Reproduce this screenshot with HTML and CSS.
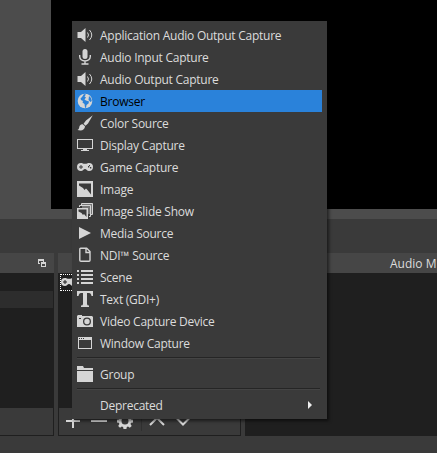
FILE: index.html
```html
<!DOCTYPE html>
<html lang="en">
<head>
<meta charset="utf-8">
<title>Sources</title>
<link rel="stylesheet" href="styles.css">
</head>
<body>
<div class="preview"><div class="canvas"></div></div>
<main class="docks">
  <section class="dock scenes">
    <header class="dock-title"><svg class="float" width="8" height="8" viewBox="0 0 8 8"><path d="M0 0h6v3H5V2H1v2h1v1H0zM3 3h5v5H3zM4 5v2h3V5z" fill-rule="evenodd"/></svg></header>
    <div class="list"><div class="row"></div></div>
    <footer class="toolbar"></footer>
  </section>
  <section class="dock sources">
    <header class="dock-title"></header>
    <div class="list"><div class="source"><svg width="16" height="14" viewBox="0 1 16 14"><path fill-rule="evenodd" d="M4 4c1.500 0 2 .8 4 .8s2.500-.8 4-.8a4 4 0 0 1 0 8c-2 0-2.500-2-4-2s-2 2-4 2a4 4 0 0 1 0-8zM3.500 6v1.500H2v1h1.500V10h1V8.500H6v-1H4.500V6z"/></svg></div></div>
    <footer class="toolbar">
      <svg width="16" height="16" viewBox="0 0 16 16"><path d="M7 1h2v6h6v2H9v6H7V9H1V7h6z"/></svg>
      <svg width="16" height="16" viewBox="0 0 16 16"><path d="M0 7h16v2H0z"/></svg>
      <svg class="gear" width="16" height="16" viewBox="0 0 16 16"><path fill-rule="evenodd" d="M6.500 0h3l.4 2.200 1.300.6L13.100 1.500l1.700 1.800-1.200 1.900.5 1.200 1.900.3v2.700l-2 .4-.5 1.300 1.200 1.800-1.900 1.900-1.800-1.200-1.200.5-.4 1.900H6.500l-.4-1.900-1.300-.5-1.800 1.200-1.800-1.900 1.200-1.800-.5-1.300-1.900-.4V6.700l1.900-.3.5-1.200-1.200-1.900L3 1.500l1.800 1.300 1.300-.6zM8 4.500a3.500 3.500 0 1 0 0 7 3.500 3.500 0 0 0 0-7z"/></svg>
      <i class="divider"></i>
      <svg class="up" width="16" height="16" viewBox="0 0 16 16"><path class="line" d="M1 12l7-7 7 7"/></svg>
      <svg class="down" width="16" height="16" viewBox="0 0 16 16"><path class="line" d="M1.500 5L8 11.500 14.500 5"/></svg>
    </footer>
  </section>
  <section class="dock mixer">
    <header class="dock-title"><span>Audio Mixer</span></header>
    <div class="list"></div>
  </section>
</main>

<nav class="menu">
  <div class="item"><svg viewBox="0 0 16 16"><path d="M.5 5H4l4.500-4v14L4 11H.5z"/><path class="thin" d="M10.500 5.500q2 2.500 0 5M12.500 3q4.500 5 0 10"/></svg><span>Application Audio Output Capture</span></div>
  <div class="item"><svg viewBox="0 0 16 16"><rect x="5.500" y="0" width="5" height="10" rx="2.500"/><path class="mid" d="M2.700 6v1.500a5.300 4.500 0 0 0 10.600 0V6M8 12v3M4.500 15h7"/></svg><span>Audio Input Capture</span></div>
  <div class="item"><svg viewBox="0 0 16 16"><path d="M.5 5H4l4.500-4v14L4 11H.5z"/><path class="thin" d="M10.500 5.500q2 2.500 0 5M12.500 3q4.500 5 0 10"/></svg><span>Audio Output Capture</span></div>
  <div class="item selected"><svg viewBox="0 0 16 16"><circle cx="8" cy="8" r="7.300"/><path class="land" d="M7 1l2 .5-1.500 2L9 4.500 7.500 6.500l1.500 1 3 1-.5 2L9.500 12 9 15l-1-.5L7.500 11 5.500 9.500 6 8 4 7l-.5-1.500L5 4zM12 3l2 2 .8 3-1.300 1-2-2z"/></svg><span>Browser</span></div>
  <div class="item"><svg viewBox="0 0 16 16"><path d="M15.800.2L9 5.500 6.500 8.700l2 2L11 8.500zM5.800 9.200C3.500 9 2.500 10.500 2.300 12S1.500 14.500.5 15c4 1.200 7.500 0 7.500-3.700z"/></svg><span>Color Source</span></div>
  <div class="item"><svg viewBox="0 0 16 16"><path fill-rule="evenodd" d="M0 2h16v10H0zm1 1v8h14V3zM6 12h4v1h2v1H4v-1h2z"/></svg><span>Display Capture</span></div>
  <div class="item"><svg viewBox="0 0 16 16"><path fill-rule="evenodd" d="M4 4c1.500 0 2 .8 4 .8s2.500-.8 4-.8a4 4 0 0 1 0 8c-2 0-2.500-2-4-2s-2 2-4 2a4 4 0 0 1 0-8zM3.500 6v1.500H2v1h1.500V10h1V8.500H6v-1H4.500V6zM11 7v1.500h1.300V7zm2 1v1.500h1.300V8zM12 6v1h1V6z"/></svg><span>Game Capture</span></div>
  <div class="item"><svg viewBox="0 0 16 16"><path d="M0 0h16v16H0z"/><path class="cut" d="M2 2.500h12v11l-3.500-4.500L9 7.500l-1.500 1.500L6 7 2 4.500z"/></svg><span>Image</span></div>
  <div class="item"><svg viewBox="0 0 16 16"><path class="back" d="M5 0h11v11H5z"/><path class="thin" d="M4.500 2V.5h11v11H14M2.500 4V2.500h11v11H12"/><path d="M0 5h11v11H0z"/><path class="cut" d="M1.500 6.500h8v7.500L7 11l-1 1-1.500-2-3-1.500z"/></svg><span>Image Slide Show</span></div>
  <div class="item"><svg viewBox="0 0 16 16"><path d="M2 2l12 6-12 6z"/></svg><span>Media Source</span></div>
  <div class="item"><svg viewBox="0 0 16 16"><path class="mid" d="M3.700 1.200h6L13 4.500v8.800q0 1-1 1H4q-1.200 0-1.200-1V2.200q0-1 .9-1zM9 1.500V5.500h4"/></svg><span>NDI™ Source</span></div>
  <div class="item"><svg viewBox="0 0 16 16"><path d="M0 1h2v2H0zM4 1h12v2H4zM0 5h2v2H0zM4 5h12v2H4zM0 9h2v2H0zM4 9h12v2H4zM0 13h2v2H0zM4 13h12v2H4z"/></svg><span>Scene</span></div>
  <div class="item"><svg viewBox="0 0 16 16"><path d="M0 0h16v5h-1.500Q14 2 12 2h-2v11q0 1.500 2 1.500V16H4v-1.500q2 0 2-1.500V2H4Q2 2 1.500 5H0z"/></svg><span>Text (GDI+)</span></div>
  <div class="item"><svg viewBox="0 0 16 16"><path fill-rule="evenodd" d="M1 2h4v1h10l1 1v10H0V3zM10 4.500a4 4 0 1 0 0 8 4 4 0 0 0 0-8zm0 1.300a2.700 2.700 0 1 1 0 5.400 2.700 2.700 0 0 1 0-5.400zM2 5v1h2V5z"/></svg><span>Video Capture Device</span></div>
  <div class="item"><svg viewBox="0 0 16 16"><path fill-rule="evenodd" d="M1 2h14v12H1zm1 3v8h12V5zm0-2v1h1V3zm2 0v1h1V3zm2 0v1h1V3z"/></svg><span>Window Capture</span></div>
  <hr>
  <div class="item"><svg viewBox="0 0 16 16"><path d="M0 0h6l1 2h9v2H0zM0 5h16v11H0z"/></svg><span>Group</span></div>
  <hr>
  <div class="item"><svg viewBox="0 0 16 16"></svg><span>Deprecated</span><svg class="arrow" viewBox="0 0 4 8"><path d="M0 0l4 4-4 4z"/></svg></div>
</nav>
</body>
</html>
```
FILE: styles.css
```css
* { box-sizing: border-box; }
body {
  margin: 0;
  width: 437px;
  height: 453px;
  overflow: hidden;
  background: #3a3a3a;
  color: #dcdcdc;
  font: 12px/22px "Open Sans", "Noto Sans", sans-serif;
  letter-spacing: -.25px;
}
svg { display: block; fill: #d5d5d5; flex: none; }
.thin, .mid, .line { fill: none; stroke: #d5d5d5; stroke-width: 1; }
.mid { stroke-width: 1.400; }
.line { stroke-width: 2; }
.cut { fill: #3a3a3a; }
.back { fill: #777; }
.land { fill: #2a82da; }

.preview { height: 219px; padding: 0 0 10px 51px; background: #4c4c4c; }
.canvas { height: 209px; background: #000; }

.docks { display: flex; gap: 4px; margin-top: 34px; height: 183px; }
.dock { display: flex; flex-direction: column; background: #3a3a3a; }
.scenes { width: 54px; }
.sources { width: 183px; }
.mixer { flex: 1; overflow: hidden; }
.dock-title { height: 20px; background: #464646; display: flex; align-items: center; }
.scenes .dock-title { justify-content: flex-end; padding-right: 8px; }
.mixer .dock-title { padding: 2px 0 0 145px; white-space: nowrap; letter-spacing: 0; }
.list { flex: 1; background: #1f1f1f; }
.row { margin: 18px 1px 0 0; height: 17px; background: #2d2d2d; }
.source { width: 170px; height: 17px; margin: 1px 0 0 2px; border: 1px dotted #fff; }
.toolbar { height: 28px; border: 1px solid #1f1f1f; border-top: 0; display: flex; align-items: center; padding: 0 0 2px 6px; gap: 10px; }
.scenes .toolbar { border-left: 0; }
.divider { width: 1px; height: 20px; background: #303030; margin-left: -2px; }
.up { margin-left: -3px; }

.menu {
  position: absolute;
  left: 72px;
  top: 21px;
  width: 255px;
  height: 398px;
  padding: 3px 5px 3px 3px;
  background: #3a3a3a;
  box-shadow: 2px 2px 3px rgba(0, 0, 0, .55);
}
.item { height: 22px; padding: 0 10px 0 2px; display: flex; align-items: center; white-space: nowrap; }
.item span { padding-top: 2px; }
.item svg { width: 16px; height: 16px; margin-right: 7px; }
.item .arrow { width: 4px; height: 8px; margin: 0 0 0 auto; fill: #eee; }
.selected { background: #2a82da; color: #000; }
hr { height: 2px; margin: 3px 2px 4px; border: 0; background: #444; border-top: 1px solid #252525; }
```
